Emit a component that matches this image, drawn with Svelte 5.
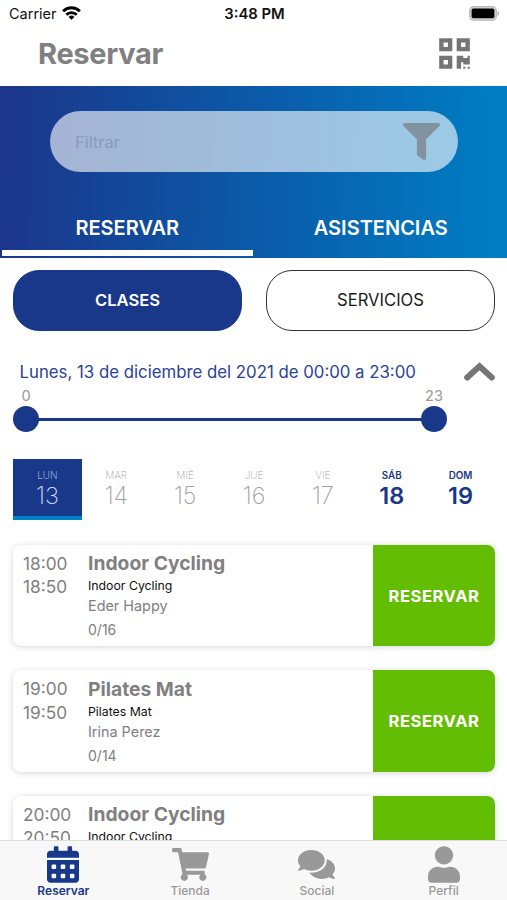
<script lang="ts">
  let section = 'reservar';
  let kind = 'clases';
  let selectedDay = 13;
  let activeTab = 'Reservar';
  let hours = { from: 0, to: 23 };
  let filter = '';

  const days = [
    { name: 'LUN', number: 13 },
    { name: 'MAR', number: 14 },
    { name: 'MIÉ', number: 15 },
    { name: 'JUE', number: 16 },
    { name: 'VIE', number: 17 },
    { name: 'SÁB', number: 18, weekend: true },
    { name: 'DOM', number: 19, weekend: true }
  ];

  const classes = [
    { start: '18:00', end: '18:50', title: 'Indoor Cycling', room: 'Indoor Cycling', coach: 'Eder Happy', places: '0/16' },
    { start: '19:00', end: '19:50', title: 'Pilates Mat', room: 'Pilates Mat', coach: 'Irina Perez', places: '0/14' },
    { start: '20:00', end: '20:50', title: 'Indoor Cycling', room: 'Indoor Cycling', coach: '', places: '' }
  ];

  const tabs = [
    {
      label: 'Reservar',
      width: 32,
      height: 37,
      box: '0 0 448 512',
      path: 'M0 464c0 26.5 21.5 48 48 48h352c26.5 0 48-21.5 48-48V192H0v272zm320-196c0-6.6 5.4-12 12-12h40c6.6 0 12 5.4 12 12v40c0 6.6-5.4 12-12 12h-40c-6.6 0-12-5.4-12-12v-40zm0 128c0-6.6 5.4-12 12-12h40c6.6 0 12 5.4 12 12v40c0 6.6-5.4 12-12 12h-40c-6.6 0-12-5.4-12-12v-40zM192 268c0-6.6 5.4-12 12-12h40c6.6 0 12 5.4 12 12v40c0 6.6-5.4 12-12 12h-40c-6.6 0-12-5.4-12-12v-40zm0 128c0-6.6 5.4-12 12-12h40c6.6 0 12 5.4 12 12v40c0 6.6-5.4 12-12 12h-40c-6.6 0-12-5.4-12-12v-40zM64 268c0-6.6 5.4-12 12-12h40c6.6 0 12 5.4 12 12v40c0 6.6-5.4 12-12 12H76c-6.6 0-12-5.4-12-12v-40zm0 128c0-6.6 5.4-12 12-12h40c6.6 0 12 5.4 12 12v40c0 6.6-5.4 12-12 12H76c-6.6 0-12-5.4-12-12v-40zM400 64h-48V16c0-8.8-7.2-16-16-16h-32c-8.8 0-16 7.2-16 16v48H160V16c0-8.8-7.2-16-16-16h-32c-8.8 0-16 7.2-16 16v48H48C21.5 64 0 85.5 0 112v48h448v-48c0-26.5-21.5-48-48-48z'
    },
    {
      label: 'Tienda',
      width: 37,
      height: 33,
      box: '0 0 576 512',
      path: 'M528.12 301.319l47.273-208C578.806 78.301 567.391 64 551.99 64H159.208l-9.166-44.81C147.758 8.021 137.93 0 126.529 0H24C10.745 0 0 10.745 0 24v16c0 13.255 10.745 24 24 24h69.883l70.248 343.435C147.325 417.1 136 435.222 136 456c0 30.928 25.072 56 56 56s56-25.072 56-56c0-15.674-6.447-29.835-16.824-40h209.647C430.447 426.165 424 440.326 424 456c0 30.928 25.072 56 56 56s56-25.072 56-56c0-22.172-12.888-41.332-31.579-50.405l5.517-24.276c3.413-15.018-8.002-29.319-23.403-29.319H218.117l-6.545-32h293.145c11.206 0 20.92-7.754 23.403-18.681z'
    },
    {
      label: 'Social',
      width: 37,
      height: 33,
      box: '0 0 576 512',
      path: 'M416 192c0-88.4-93.1-160-208-160S0 103.6 0 192c0 34.3 14.1 65.9 38 92-13.4 30.2-35.5 54.2-35.8 54.5-2.2 2.3-2.8 5.7-1.5 8.7S4.8 352 8 352c36.6 0 66.9-12.3 88.7-25 32.2 15.7 70.3 25 111.3 25 114.9 0 208-71.6 208-160zm122 220c23.9-26 38-57.7 38-92 0-66.9-53.5-124.2-129.3-148.1.9 6.6 1.3 13.3 1.3 20.1 0 105.9-107.7 192-240 192-10.8 0-21.3-.8-31.7-1.9C207.8 439.6 281.8 480 368 480c41 0 79.1-9.2 111.3-25 21.8 12.7 52.1 25 88.7 25 3.2 0 6.1-1.9 7.3-4.8 1.3-2.9.7-6.3-1.5-8.7-.3-.3-22.4-24.2-35.8-54.5z'
    },
    {
      label: 'Perfil',
      width: 32,
      height: 37,
      box: '0 0 448 512',
      path: 'M224 256c70.7 0 128-57.3 128-128S294.7 0 224 0 96 57.3 96 128s57.3 128 128 128zm89.6 32h-16.7c-22.2 10.2-46.9 16-72.9 16s-50.6-5.8-72.9-16h-16.7C60.2 288 0 348.2 0 422.4V464c0 26.5 21.5 48 48 48h352c26.5 0 48-21.5 48-48v-41.6c0-74.2-60.2-134.4-134.4-134.4z'
    }
  ];
</script>

<div class="app">
  <div class="status">
    <div class="carrier">
      <span>Carrier</span>
      <svg width="19" height="14" viewBox="0 0 19 14" fill="none" stroke="#000" stroke-width="2.8">
        <path d="M1.1 5.2a12 12 0 0 1 16.8 0" />
        <path d="M4.3 8.7a7.4 7.4 0 0 1 10.4 0" />
        <path d="M9.5 13.8L6.6 10.9a4.1 4.1 0 0 1 5.8 0z" fill="#000" stroke="none" />
      </svg>
    </div>
    <span class="clock">3:48 PM</span>
    <svg class="battery" width="31" height="15" viewBox="0 0 31 15">
      <rect x=".7" y=".7" width="26.6" height="13.4" rx="3.8" fill="#d8d8d8" stroke="#b5b5b5" stroke-width="1.2" />
      <rect x="2.6" y="2.6" width="22.8" height="9.6" rx="1.6" />
      <path d="M28.6 5v5c2-.8 2-4.2 0-5z" fill="#aaa" />
    </svg>
  </div>

  <header>
    <h1>Reservar</h1>
    <svg width="31" height="35" viewBox="0 0 448 512" fill="#757575">
      <path d="M0 224h192V32H0v192zM64 96h64v64H64V96zm192-64v192h192V32H256zm128 128h-64V96h64v64zM0 480h192V288H0v192zm64-128h64v64H64v-64zm352-64h32v128h-96v-32h-32v96h-64V288h96v32h64v-32zm0 160h32v32h-32v-32zm-64 0h32v32h-32v-32z" />
    </svg>
  </header>

  <div class="hero">
    <div class="search">
      <input placeholder="Filtrar" bind:value={filter} />
      <svg width="37" height="37" viewBox="0 0 512 512" fill="#83929f">
        <path d="M487.976 0H24.028C2.71 0-8.047 25.866 7.058 40.971L192 225.941V432c0 7.831 3.821 15.17 10.237 19.662l80 55.98C298.02 518.69 320 507.493 320 487.98V225.941l184.947-184.97C520.021 25.896 509.338 0 487.976 0z" />
      </svg>
    </div>
    <div class="sections">
      <button class:active={section === 'reservar'} on:click={() => (section = 'reservar')}>RESERVAR</button>
      <button class:active={section === 'asistencias'} on:click={() => (section = 'asistencias')}>ASISTENCIAS</button>
    </div>
  </div>

  <div class="kinds">
    <button class:active={kind === 'clases'} on:click={() => (kind = 'clases')}>CLASES</button>
    <button class:active={kind === 'servicios'} on:click={() => (kind = 'servicios')}>SERVICIOS</button>
  </div>

  <div class="date">
    <span>Lunes, 13 de diciembre del 2021 de 00:00 a 23:00</span>
    <svg width="32" height="20" viewBox="0 0 32 20" fill="none" stroke="#757575" stroke-width="6" stroke-linecap="round">
      <path d="M4.2 15.5L16.5 4.2 28.8 15.5" />
    </svg>
  </div>

  <div class="slider">
    <div class="handle"><span>{hours.from}</span><i></i></div>
    <div class="track"></div>
    <div class="handle"><span>{hours.to}</span><i></i></div>
  </div>

  <div class="days">
    {#each days as day}
      <button
        class="day"
        class:weekend={day.weekend}
        class:selected={day.number === selectedDay}
        on:click={() => (selectedDay = day.number)}
      >
        <small>{day.name}</small>
        <span>{day.number}</span>
      </button>
    {/each}
  </div>

  <div class="list">
    {#each classes as c}
      <div class="card">
        <div class="times">
          <span>{c.start}</span>
          <span>{c.end}</span>
        </div>
        <div class="info">
          <h2>{c.title}</h2>
          <p class="room">{c.room}</p>
          <p class="coach">{c.coach}</p>
          <p class="places">{c.places}</p>
        </div>
        <button class="book">RESERVAR</button>
      </div>
    {/each}
  </div>

  <nav>
    {#each tabs as tab}
      <button class:active={tab.label === activeTab} on:click={() => (activeTab = tab.label)}>
        <span class="icon">
          <svg width={tab.width} height={tab.height} viewBox={tab.box} fill="currentColor"><path d={tab.path} /></svg>
        </span>
        <span>{tab.label}</span>
      </button>
    {/each}
  </nav>
</div>

<style>
  :global(body) { margin: 0; background: #fff; }
  .app {
    height: 900px; width: 507px; overflow: hidden;
    display: flex; flex-direction: column;
    font-family: Inter, Roboto, sans-serif; color: #808080;
    background: #fff;
  }
  .app > * { flex: none; box-sizing: border-box; }
  button { border: none; background: none; padding: 0; margin: 0; font: inherit; color: inherit; }
  svg { display: block; }

  .status {
    height: 27px; padding: 0 7px 0 9px; color: #111;
    display: grid; grid-template-columns: 1fr auto 1fr; align-items: center;
    font-size: 14.5px;
  }
  .carrier { display: flex; align-items: center; gap: 5px; }
  .carrier svg { margin-top: -2px; }
  .clock { font-weight: 600; font-size: 14.8px; }
  .battery { justify-self: end; margin-top: -1px; }

  header {
    height: 59px; padding: 0 37px 7px 38px;
    display: flex; align-items: center; justify-content: space-between;
  }
  header svg { margin-top: 1px; }
  h1 { margin: 0; font-size: 29px; font-weight: 700; letter-spacing: -0.3px; }

  .hero {
    height: 172px; padding-top: 25px;
    background: linear-gradient(91deg, #1b368b 1%, #0b5aa8 50%, #007dc3 97%);
    display: flex; flex-direction: column; justify-content: space-between;
  }
  .search {
    height: 61px; margin: 0 49px 0 50px; padding: 0 18px 0 25px; box-sizing: border-box;
    border-radius: 31px; background: rgba(255, 255, 255, 0.61);
    display: flex; align-items: center;
  }
  .search input {
    flex: 1; min-width: 0; padding: 0; border: none; outline: none; background: none;
    font: 16.5px Inter, sans-serif; color: #53647f;
  }
  .search input::placeholder { color: #8b9bbd; opacity: 1; }
  .sections { display: flex; height: 60px; }
  .sections button {
    flex: 1; margin: 0 1px 2px 2px; padding-top: 8px; color: #fff;
    font-size: 20px; font-weight: 600; border-bottom: 6px solid transparent;
  }
  .sections .active { border-color: #fff; }

  .kinds { display: flex; gap: 24px; padding: 11.5px 12px 0 13px; height: 73px; }
  .kinds button {
    flex: 1; height: 61.5px; box-sizing: border-box; border: 1.5px solid #333; border-radius: 26px;
    color: #1a1a1a; font-size: 16.6px;
  }
  .kinds .active { background: #19388a; border-color: #19388a; color: #fff; font-weight: 600; }

  .date {
    height: 56px; padding: 25px 12px 0 19.5px; color: #2b4295; font-size: 16.8px;
    display: flex; align-items: center; justify-content: space-between;
  }

  .slider { height: 45px; padding: 0 60px 0 13px; display: flex; align-items: flex-start; }
  .handle { width: 26px; display: flex; flex-direction: column; align-items: center; font-size: 14.5px; color: #999; }
  .handle span { height: 19px; line-height: 17px; }
  .handle i { width: 26px; height: 26px; border-radius: 50%; background: #19388a; }
  .track { flex: 1; height: 3px; margin: 31px -2px 0; background: #19388a; }

  .days { display: flex; height: 88px; padding: 27px 12px 0 13px; }
  .day {
    flex: 1; height: 61px; box-sizing: border-box; border-bottom: 4px solid transparent;
    display: flex; flex-direction: column; align-items: center; color: #a0a0a0; font-weight: 250;
  }
  .day small { margin-top: 10px; font-size: 9.8px; line-height: 13px; }
  .day span { font-size: 23.5px; line-height: 28px; }
  .day.selected { background: #19388a; border-color: #0083c6; color: #cfdaf3; }
  .day.weekend { color: #19388a; font-weight: 600; }

  .list { height: 320px; padding: 24.5px 12px 0 13px; overflow: hidden; }
  .card {
    height: 101.5px; margin-bottom: 24px; border-radius: 8px; overflow: hidden;
    background: #fff; box-shadow: 0 1px 6px rgba(0, 0, 0, 0.17); display: flex;
  }
  .times { width: 75px; padding: 7px 0 0 10px; box-sizing: border-box; font-size: 17.3px; line-height: 23.5px; }
  .times span { display: block; }
  .info { flex: 1; padding-top: 6.5px; }
  .info h2 { margin: 0; font-size: 19.3px; line-height: 24px; font-weight: 700; }
  .info p { margin: 0; font-size: 14.4px; }
  .info .room { font-size: 12.3px; line-height: 22px; color: #111; }
  .info .coach { line-height: 18px; }
  .info .places { margin-top: 6px; line-height: 18px; font-size: 14px; }
  .book {
    width: 122px; padding-top: 1px; background: #63bd03; color: #fff;
    font-size: 16.6px; font-weight: 700; letter-spacing: 0.5px;
  }

  nav {
    height: 60px; background: #f8f8f8; border-top: 1px solid #ddd;
    display: flex; position: relative;
  }
  nav button {
    flex: 1; display: flex; flex-direction: column; align-items: center;
    color: #999; font-size: 12px; line-height: 14px; font-weight: 500;
  }
  nav .icon { height: 37px; margin-top: 5px; display: flex; align-items: center; }
  nav .icon + span { margin-top: 1px; }
  nav .active { color: #19388a; font-weight: 600; }
</style>
